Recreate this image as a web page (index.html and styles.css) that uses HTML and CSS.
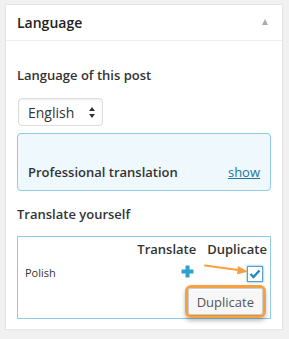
FILE: index.html
```html
<!DOCTYPE html>
<html lang="en">
<head>
  <meta charset="UTF-8">
  <title>Language</title>
  <link rel="stylesheet" href="styles.css">
</head>
<body>
  <div class="postbox">
    <div class="postbox-header">
      <h2>Language</h2>
      <span class="toggle"></span>
    </div>
    <div class="inside">
      <p class="label">Language of this post</p>
      <div class="select">
        <span>English</span>
        <svg width="6" height="11" viewBox="0 0 6 11"><path d="M3 0 L6 4 L0 4 Z M0 7 L6 7 L3 11 Z" fill="#333"/></svg>
      </div>

      <div class="pro-box">
        <span class="pro-title">Professional translation</span>
        <a href="#" class="show">show</a>
      </div>

      <p class="label">Translate yourself</p>
      <div class="translate-box">
        <div class="grid">
          <span></span>
          <span class="col-head">Translate</span>
          <span class="col-head">Duplicate</span>

          <span class="lang">Polish</span>
          <svg class="plus" width="13" height="13" viewBox="0 0 13 13"><path d="M4.5 0.5 H8.5 V4.5 H12.5 V8.5 H8.5 V12.5 H4.5 V8.5 H0.5 V4.5 H4.5 Z" fill="#2ea2cc"/></svg>
          <span class="checkbox">
            <svg width="12" height="10" viewBox="0 0 12 10"><path d="M1.5 5 L4.5 8 L10.5 1.5" fill="none" stroke="#1e8cbe" stroke-width="2.4"/></svg>
          </span>

          <span class="btn-ring"><button class="button">Duplicate</button></span>
        </div>
        <svg class="arrow" width="46" height="12" viewBox="0 0 46 12">
          <path d="M1 1.5 L36 6.2" stroke="#f5a142" stroke-width="2" stroke-linecap="round"/>
          <path d="M34 2 L44 7.5 L33 10.5 Z" fill="#f5a142"/>
        </svg>
      </div>
    </div>
  </div>
</body>
</html>
```

FILE: styles.css
```css
body {
  margin: 0;
  padding: 4px 0 0 5px;
  background: #f1f1f1;
  font-family: 'Open Sans', sans-serif;
  color: #333;
}

.postbox {
  width: 278px;
  box-sizing: border-box;
  background: #fff;
  border: 1px solid #e5e5e5;
  box-shadow: 0 1px 1px rgba(0, 0, 0, 0.04);
}

.postbox-header {
  height: 35px;
  border-bottom: 1px solid #eee;
  display: flex;
  align-items: center;
  justify-content: space-between;
  padding: 0 14px 0 11px;
}

.postbox-header h2 {
  margin: 0;
  font-size: 14px;
  font-weight: 600;
  line-height: 35px;
  color: #222;
}

.toggle {
  width: 0;
  height: 0;
  border-left: 3.5px solid transparent;
  border-right: 3.5px solid transparent;
  border-bottom: 6px solid #aaa;
  margin-top: -2px;
}

.inside {
  padding: 0 11px 10px 11px;
}

.label {
  margin: 0;
  font-size: 13px;
  font-weight: 600;
  line-height: 18px;
  color: #333;
}

.inside > .label:first-child {
  padding-top: 25px;
}

.select {
  margin: 14px 0 7px 1px;
  width: 85px;
  height: 28px;
  box-sizing: border-box;
  border: 1px solid #ddd;
  border-radius: 4px;
  box-shadow: inset 0 1px 2px rgba(0, 0, 0, 0.07);
  display: flex;
  align-items: center;
  justify-content: space-between;
  padding: 0 7px 0 9px;
  font-size: 14px;
  color: #333;
}

.pro-box {
  border: 1px solid #8fcbe3;
  border-radius: 4px;
  background: #eff8fd;
  padding: 29px 10px 9px 10px;
  display: flex;
  justify-content: space-between;
  font-size: 13px;
  line-height: 18px;
  margin-bottom: 14px;
}

.pro-title {
  font-weight: 600;
  color: #333;
}

.show {
  color: #21759b;
}

.translate-box {
  position: relative;
  margin-top: 13px;
  border: 1px solid #8fcbe3;
  padding: 3px 3px 0 7px;
}

.grid {
  display: grid;
  grid-template-columns: 1fr auto auto;
  column-gap: 11px;
}

.col-head {
  font-size: 13px;
  font-weight: 600;
  line-height: 18px;
  text-align: right;
  color: #333;
}

.lang {
  font-size: 11px;
  line-height: 15px;
  margin-top: 7px;
  color: #333;
}

.plus {
  justify-self: end;
  margin: 7px 2px 0 0;
}

.checkbox {
  justify-self: end;
  margin: 8px 4px 3px 0;
  width: 16px;
  height: 16px;
  box-sizing: border-box;
  border: 1px solid #5b9dd9;
  box-shadow: 0 0 2px rgba(30, 140, 190, 0.8);
  display: flex;
  align-items: center;
  justify-content: center;
}

.btn-ring {
  grid-column: 2 / 4;
  justify-self: end;
  margin-right: 1px;
  border: 3px solid #f5a142;
  border-radius: 6px;
  box-shadow: 0 3px 4px rgba(0, 0, 0, 0.25);
  display: flex;
}

.button {
  height: 27px;
  padding: 0 8px;
  background: #f7f7f7;
  border: 1px solid #ccc;
  border-radius: 3px;
  box-shadow: inset 0 1px 0 #fff, 0 1px 0 rgba(0, 0, 0, 0.08);
  font-family: 'Open Sans', sans-serif;
  font-size: 13px;
  color: #555;
}

.arrow {
  position: absolute;
  left: 186px;
  top: 27px;
}
```
